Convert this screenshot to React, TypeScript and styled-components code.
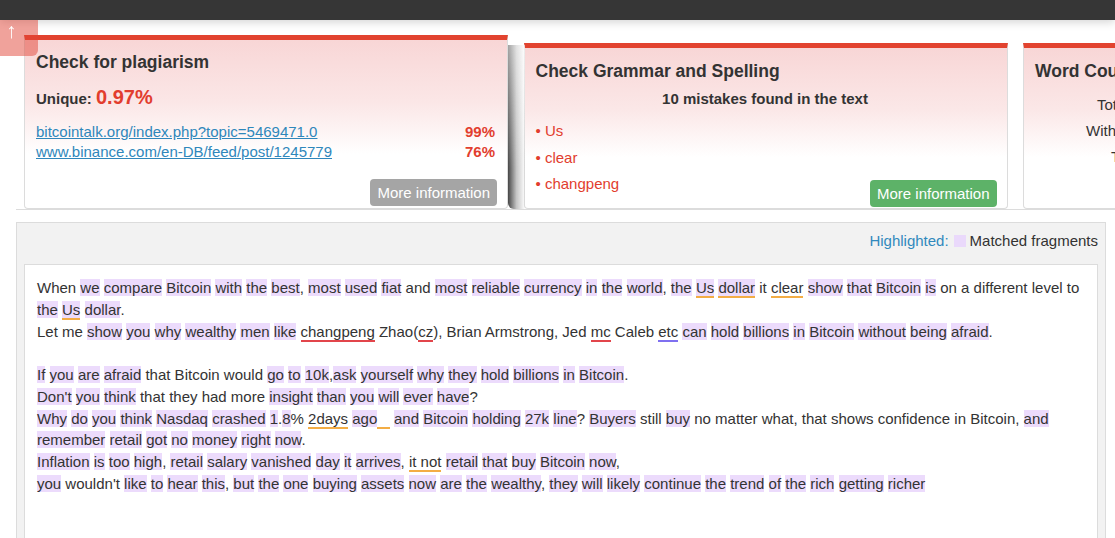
import React from 'react'
import styled, { createGlobalStyle, css } from 'styled-components'

const GlobalStyle = createGlobalStyle`
  html, body {
    margin: 0;
    padding: 0;
    overflow: hidden;
    background: #fff;
  }
  body {
    font-family: 'Liberation Sans', Arial, sans-serif;
    color: #333;
  }
`

// text markup: [word] = matched fragment, {o:word} = underline only,
// {O:word} = matched + underline. o orange, r red, b blue
const lines = [
  'When [we] [compare] [Bitcoin] [with] [the] [best], [most] [used] [fiat] and [most] [reliable] [currency] [in] [the] [world], [the] {O:Us} {O:dollar} it {o:clear} [show] [that] [Bitcoin] [is] on a different level to [the] {O:Us} [dollar].',
  'Let me [show] [you] [why] [wealthy] [men] [like] {r:changpeng} Zhao({r:cz}), Brian Armstrong, Jed {r:mc} Caleb {b:etc} [can] [hold] [billions] [in] [Bitcoin] [without] [being] [afraid].',
  '',
  '[If] [you] [are] [afraid] that Bitcoin would [go] [to] [10k],[ask] [yourself] [why] [they] [hold] [billions] [in] [Bitcoin].',
  "[Don't] [you] [think] that they had more [insight] [than] [you] [will] [ever] [have]?",
  '[Why] [do] [you] [think] [Nasdaq] [crashed] [1].[8]% {o:2days} [ago]{o:\u00a0\u00a0\u00a0}\u00a0[and] [Bitcoin] [holding] [27k] [line]? [Buyers] still [buy] no matter what, that shows confidence in Bitcoin, [and] [remember] [retail] [got] [no] [money] [right] [now].',
  '[Inflation] [is] [too] [high], [retail] [salary] [vanished] [day] [it] [arrives], {o:it not} [retail] [that] [buy] [Bitcoin] [now],',
  "[you] wouldn't [like] [to] [hear] [this], [but] [the] [one] [buying] [assets] [now] [are] [the] [wealthy], [they] [will] [likely] [continue] [the] [trend] [of] [the] [rich] [getting] [richer]",
]

const lineColors: Record<string, string> = {
  o: '#f3ad45',
  r: '#e2454b',
  b: '#7f70f0',
}

const TopBar = styled.div`
  position: relative;
  z-index: 1;
  height: 20px;
  background: #363636;
  box-shadow: 0 2px 10px rgba(0, 0, 0, 0.18);
`

const ScrollTop = styled.div`
  position: fixed;
  top: 20px;
  left: 0;
  z-index: 5;
  width: 38px;
  height: 36px;
  box-sizing: border-box;
  padding: 0 0 0 6px;
  background: rgba(226, 70, 55, 0.5);
  border-radius: 0 0 6px 0;
  color: #fff;
  font-family: 'Liberation Sans', Arial, sans-serif;
  font-size: 21px;
  line-height: 22px;
`

const Carousel = styled.div`
  display: flex;
  align-items: flex-end;
  gap: 15.5px;
  margin-left: 16px;
  padding: 15px 0 0 8px;
  border-bottom: 1px solid #dcdcdc;
  overflow: hidden;
`

const Card = styled.div<{ $active?: boolean; $shaded?: boolean }>`
  position: relative;
  flex: 0 0 484px;
  box-sizing: border-box;
  height: ${p => (p.$active ? 174 : 166)}px;
  padding: ${p => (p.$active ? 10 : 11)}px 12px 0 11px;
  border: 1px solid #dcdcdc;
  border-top: 5px solid #e2432f;
  border-radius: 0 0 4px 4px;
  background: linear-gradient(180deg, #f8d6d6 0%, #fbe7e7 38%, #fff 68%);

  ${p =>
    p.$shaded &&
    css`
      &::before {
        content: '';
        position: absolute;
        left: -17px;
        top: -3px;
        bottom: -1px;
        width: 17px;
        border-radius: 0 0 0 6px;
        background: linear-gradient(180deg, rgba(255, 255, 255, 0.5) 0%, rgba(255, 255, 255, 0) 75%),
          linear-gradient(90deg, rgba(50, 50, 50, 0.9) 0%, rgba(150, 150, 150, 0.55) 50%, rgba(255, 255, 255, 0) 100%);
      }
    `}
`

const CardTitle = styled.div`
  font-size: 17.5px;
  font-weight: 700;
  line-height: 24px;
  color: #333;
`

const Unique = styled.div`
  margin-top: 10px;
  font-size: 15px;
  font-weight: 700;
  line-height: 26px;
  color: #333;
`

const UniqueValue = styled.span`
  font-size: 20px;
  color: #e23d2e;
`

const Sources = styled.div`
  margin-top: 10px;
`

const SourceRow = styled.div`
  display: flex;
  justify-content: space-between;
  font-size: 15px;
  line-height: 20px;
`

const SourceLink = styled.a`
  color: #2f87bb;
  text-decoration: underline;
`

const Percent = styled.span`
  font-weight: 700;
  color: #e23d2e;
`

const Footer = styled.div`
  display: flex;
  justify-content: flex-end;
  margin-top: 17px;
  margin-right: -2px;
`

const Button = styled.div<{ $tone: 'gray' | 'green' }>`
  height: 27px;
  padding: 0 7px;
  border-radius: 4px;
  font-size: 15px;
  line-height: 27px;
  color: #fff;
  background: ${p => (p.$tone === 'gray' ? '#a5a5a5' : '#5db268')};
`

const Subtitle = styled.div`
  margin-top: 5px;
  text-align: center;
  font-size: 15px;
  font-weight: 700;
  line-height: 22px;
  color: #333;
`

const MistakesRow = styled.div`
  display: flex;
  justify-content: space-between;
  align-items: flex-end;
  margin-top: 8px;
  margin-right: -2px;
`

const Mistakes = styled.div`
  padding-bottom: 9px;
`

const Mistake = styled.div`
  font-size: 15px;
  line-height: 26.5px;
  color: #e23d2e;
`

const Stats = styled.div`
  margin-top: 9px;
`

const StatLine = styled.div<{ $indent: number }>`
  padding-left: ${p => p.$indent}px;
  font-size: 15px;
  line-height: 26px;
  color: #333;
  white-space: nowrap;
`

const Result = styled.div`
  margin: 12px 9px 0 16px;
  background: #f2f2f2;
  border: 1px solid #dcdcdc;
  padding-bottom: 40px;
`

const Legend = styled.div`
  display: flex;
  justify-content: flex-end;
  align-items: center;
  padding: 7px 7px 12px 0;
  font-size: 15px;
  line-height: 22px;
`

const LegendLabel = styled.span`
  color: #3189bd;
`

const Swatch = styled.span`
  display: inline-block;
  width: 12px;
  height: 12px;
  margin: 0 4px 0 5px;
  background: #ead9fb;
`

const TextBox = styled.div`
  margin: 0 7px;
  min-height: 300px;
  padding: 12px 12px;
  background: #fff;
  border: 1px solid #dcdcdc;
  font-size: 15px;
  line-height: 21.75px;
  color: #333;
`

const TextLine = styled.div`
  min-height: 21.75px;
`

const Fragment = styled.span<{ $hl?: boolean; $line?: string }>`
  ${p => p.$hl && 'background: #ecdbfc;'}
  ${p => p.$line && `border-bottom: 2px solid ${p.$line};`}
`

function renderLine(src: string) {
  const out: React.ReactNode[] = []
  const re = /\[([^\]]+)\]|\{([oOrb]):([^}]*)\}/g
  let last = 0
  let m: RegExpExecArray | null
  let k = 0
  while ((m = re.exec(src))) {
    if (m.index > last) out.push(src.slice(last, m.index))
    if (m[1] !== undefined) {
      out.push(
        <Fragment key={k++} $hl>
          {m[1]}
        </Fragment>,
      )
    } else {
      const kind = m[2]
      out.push(
        <Fragment key={k++} $hl={kind === 'O'} $line={lineColors[kind.toLowerCase()]}>
          {m[3]}
        </Fragment>,
      )
    }
    last = re.lastIndex
  }
  if (last < src.length) out.push(src.slice(last))
  return out
}

export default function App() {
  return (
    <>
      <GlobalStyle />
      <TopBar />
      <ScrollTop>↑</ScrollTop>
      <Carousel>
        <Card $active>
          <CardTitle>Check for plagiarism</CardTitle>
          <Unique>
            Unique: <UniqueValue>0.97%</UniqueValue>
          </Unique>
          <Sources>
            <SourceRow>
              <SourceLink>bitcointalk.org/index.php?topic=5469471.0</SourceLink>
              <Percent>99%</Percent>
            </SourceRow>
            <SourceRow>
              <SourceLink>www.binance.com/en-DB/feed/post/1245779</SourceLink>
              <Percent>76%</Percent>
            </SourceRow>
          </Sources>
          <Footer>
            <Button $tone="gray">More information</Button>
          </Footer>
        </Card>
        <Card $shaded>
          <CardTitle>Check Grammar and Spelling</CardTitle>
          <Subtitle>10 mistakes found in the text</Subtitle>
          <MistakesRow>
            <Mistakes>
              <Mistake>• Us</Mistake>
              <Mistake>• clear</Mistake>
              <Mistake>• changpeng</Mistake>
            </Mistakes>
            <Button $tone="green">More information</Button>
          </MistakesRow>
        </Card>
        <Card>
          <CardTitle>Word Count</CardTitle>
          <Stats>
            <StatLine $indent={62}>Total characters: 631</StatLine>
            <StatLine $indent={51}>Without spaces: 526</StatLine>
            <StatLine $indent={76}>Total words: 113</StatLine>
          </Stats>
        </Card>
      </Carousel>
      <Result>
        <Legend>
          <LegendLabel>Highlighted:</LegendLabel>
          <Swatch />
          Matched fragments
        </Legend>
        <TextBox>
          {lines.map((l, i) => (
            <TextLine key={i}>{renderLine(l)}</TextLine>
          ))}
        </TextBox>
      </Result>
    </>
  )
}
